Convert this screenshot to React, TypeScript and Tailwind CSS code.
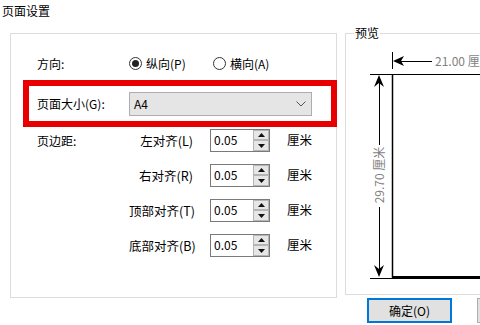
import React from "react";

const font = { fontFamily: '"Microsoft YaHei", "Noto Sans CJK SC", "Noto Sans", sans-serif' };

function Radio({ checked, label, className = "" }: { checked?: boolean; label: string; className?: string }) {
  return (
    <div className={"flex items-center " + className}>
      <span className="w-[13px] h-[13px] rounded-full border border-[#333] bg-white flex items-center justify-center">
        {checked && <span className="w-[7px] h-[7px] rounded-full bg-[#222]" />}
      </span>
      <span className="ml-[4px]">{label}</span>
    </div>
  );
}

function Spin() {
  return (
    <div className="w-[60px] h-[23px] border border-[#7a7a7a] bg-white flex">
      <div className="flex-1 pl-[3px] leading-[19px] text-[12px]">0.05</div>
      <div className="w-[16px] flex flex-col">
        <div className="h-[10px] border border-[#b5b5b5] bg-[#e6e6e6] flex items-center justify-center">
          <svg width="7" height="4" viewBox="0 0 7 4"><path d="M0 4 L3.5 0 L7 4 Z" fill="#111" /></svg>
        </div>
        <div className="h-[11px] border border-[#b5b5b5] bg-[#e6e6e6] flex items-center justify-center">
          <svg width="7" height="4" viewBox="0 0 7 4"><path d="M0 0 L7 0 L3.5 4 Z" fill="#111" /></svg>
        </div>
      </div>
    </div>
  );
}

function MarginRow({ first, label }: { first?: boolean; label: string }) {
  return (
    <div className="flex items-center h-[23px] pl-[26px]">
      <div className="w-[92px]">{first ? "页边距:" : ""}</div>
      <div className="w-[64px] text-right whitespace-nowrap pt-[2px] text-[12.5px]">{label}</div>
      <div className="ml-[17px]">
        <Spin />
      </div>
      <div className="ml-[17px] text-[12.5px]">厘米</div>
    </div>
  );
}

export default function App() {
  return (
    <div className="w-[480px] h-[325px] bg-white overflow-hidden text-[12px] text-black" style={font}>
      <div className="h-[33px] pl-[2px] pt-[2px] leading-[17px] text-[12px]">页面设置</div>
      <div className="flex items-start">
        {/* left group */}
        <div className="ml-[10px] w-[327px] h-[265px] border border-[#dcdcdc] shrink-0">
          <div className="mt-[19px] h-[21px] flex items-center pl-[26px]">
            <div className="w-[92px]">方向:</div>
            <Radio checked label="纵向(P)" className="w-[84px]" />
            <Radio label="横向(A)" />
          </div>
          <div className="mt-[6px] ml-[12px] w-[314px] h-[47px] border-[6px] border-[#e80000] flex items-center">
            <div className="w-[100px] pl-[8px]">页面大小(G):</div>
            <div className="w-[183px] h-[24px] bg-[#e5e5e5] border border-[#adadad] flex items-center justify-between pl-[4px] pr-[5px]">
              <span>A4</span>
              <svg width="10" height="6" viewBox="0 0 10 6">
                <path d="M0.5 0.5 L5 5 L9.5 0.5" fill="none" stroke="#555" strokeWidth="1" />
              </svg>
            </div>
          </div>
          <div className="mt-[2px] flex flex-col gap-[12px]">
            <MarginRow first label="左对齐(L)" />
            <MarginRow label="右对齐(R)" />
            <MarginRow label="顶部对齐(T)" />
            <MarginRow label="底部对齐(B)" />
          </div>
        </div>
        {/* right column */}
        <div className="ml-[8px] flex flex-col shrink-0">
          <div className="relative w-[160px] h-[262px] border border-[#dcdcdc]">
            <span className="absolute left-[8px] top-[-9px] px-[1px] bg-white leading-[16px]">预览</span>
            <svg className="absolute left-[-1px] top-[-1px]" width="160" height="262" viewBox="0 0 160 262">
              {/* horizontal dimension */}
              <line x1="47.5" y1="19" x2="47.5" y2="36" stroke="#000" strokeWidth="1" />
              <path d="M48 28 L59 23 L56 28 L59 33 Z" fill="#000" />
              <line x1="56" y1="28.5" x2="87" y2="28.5" stroke="#000" strokeWidth="1" />
              <text x="90" y="32.5" fontSize="12" fill="#7f7f7f" style={font}>21.00 厘米</text>
              {/* page */}
              <line x1="47.5" y1="41" x2="47.5" y2="246" stroke="#000" strokeWidth="1.5" />
              <line x1="47" y1="41.5" x2="160" y2="41.5" stroke="#000" strokeWidth="1" />
              <rect x="47" y="243" width="113" height="3" fill="#000" />
              {/* vertical dimension */}
              <line x1="25" y1="41.5" x2="47" y2="41.5" stroke="#000" strokeWidth="1" />
              <path d="M34 42 L29 54 L34 50 L39 54 Z" fill="#000" />
              <line x1="34.5" y1="50" x2="34.5" y2="112" stroke="#000" strokeWidth="1" />
              <text
                x="0"
                y="0"
                fontSize="12"
                fill="#7f7f7f"
                textAnchor="middle"
                transform="translate(38.5 142) rotate(-90)"
                style={font}
              >
                29.70 厘米
              </text>
              <line x1="34.5" y1="174" x2="34.5" y2="236" stroke="#000" strokeWidth="1" />
              <path d="M34 244 L29 232 L34 236 L39 232 Z" fill="#000" />
              <line x1="25" y1="245.5" x2="47" y2="245.5" stroke="#000" strokeWidth="1" />
            </svg>
          </div>
          <div className="mt-[3px] pl-[22px] flex gap-[25px]">
            <button className="w-[85px] h-[25px] border-2 border-[#0078d7] bg-[#e1e1e1] text-[12px] leading-[19px]">
              确定(O)
            </button>
            <button className="w-[85px] h-[25px] border border-[#adadad] bg-[#e1e1e1] text-[12px]">取消</button>
          </div>
        </div>
      </div>
    </div>
  );
}
